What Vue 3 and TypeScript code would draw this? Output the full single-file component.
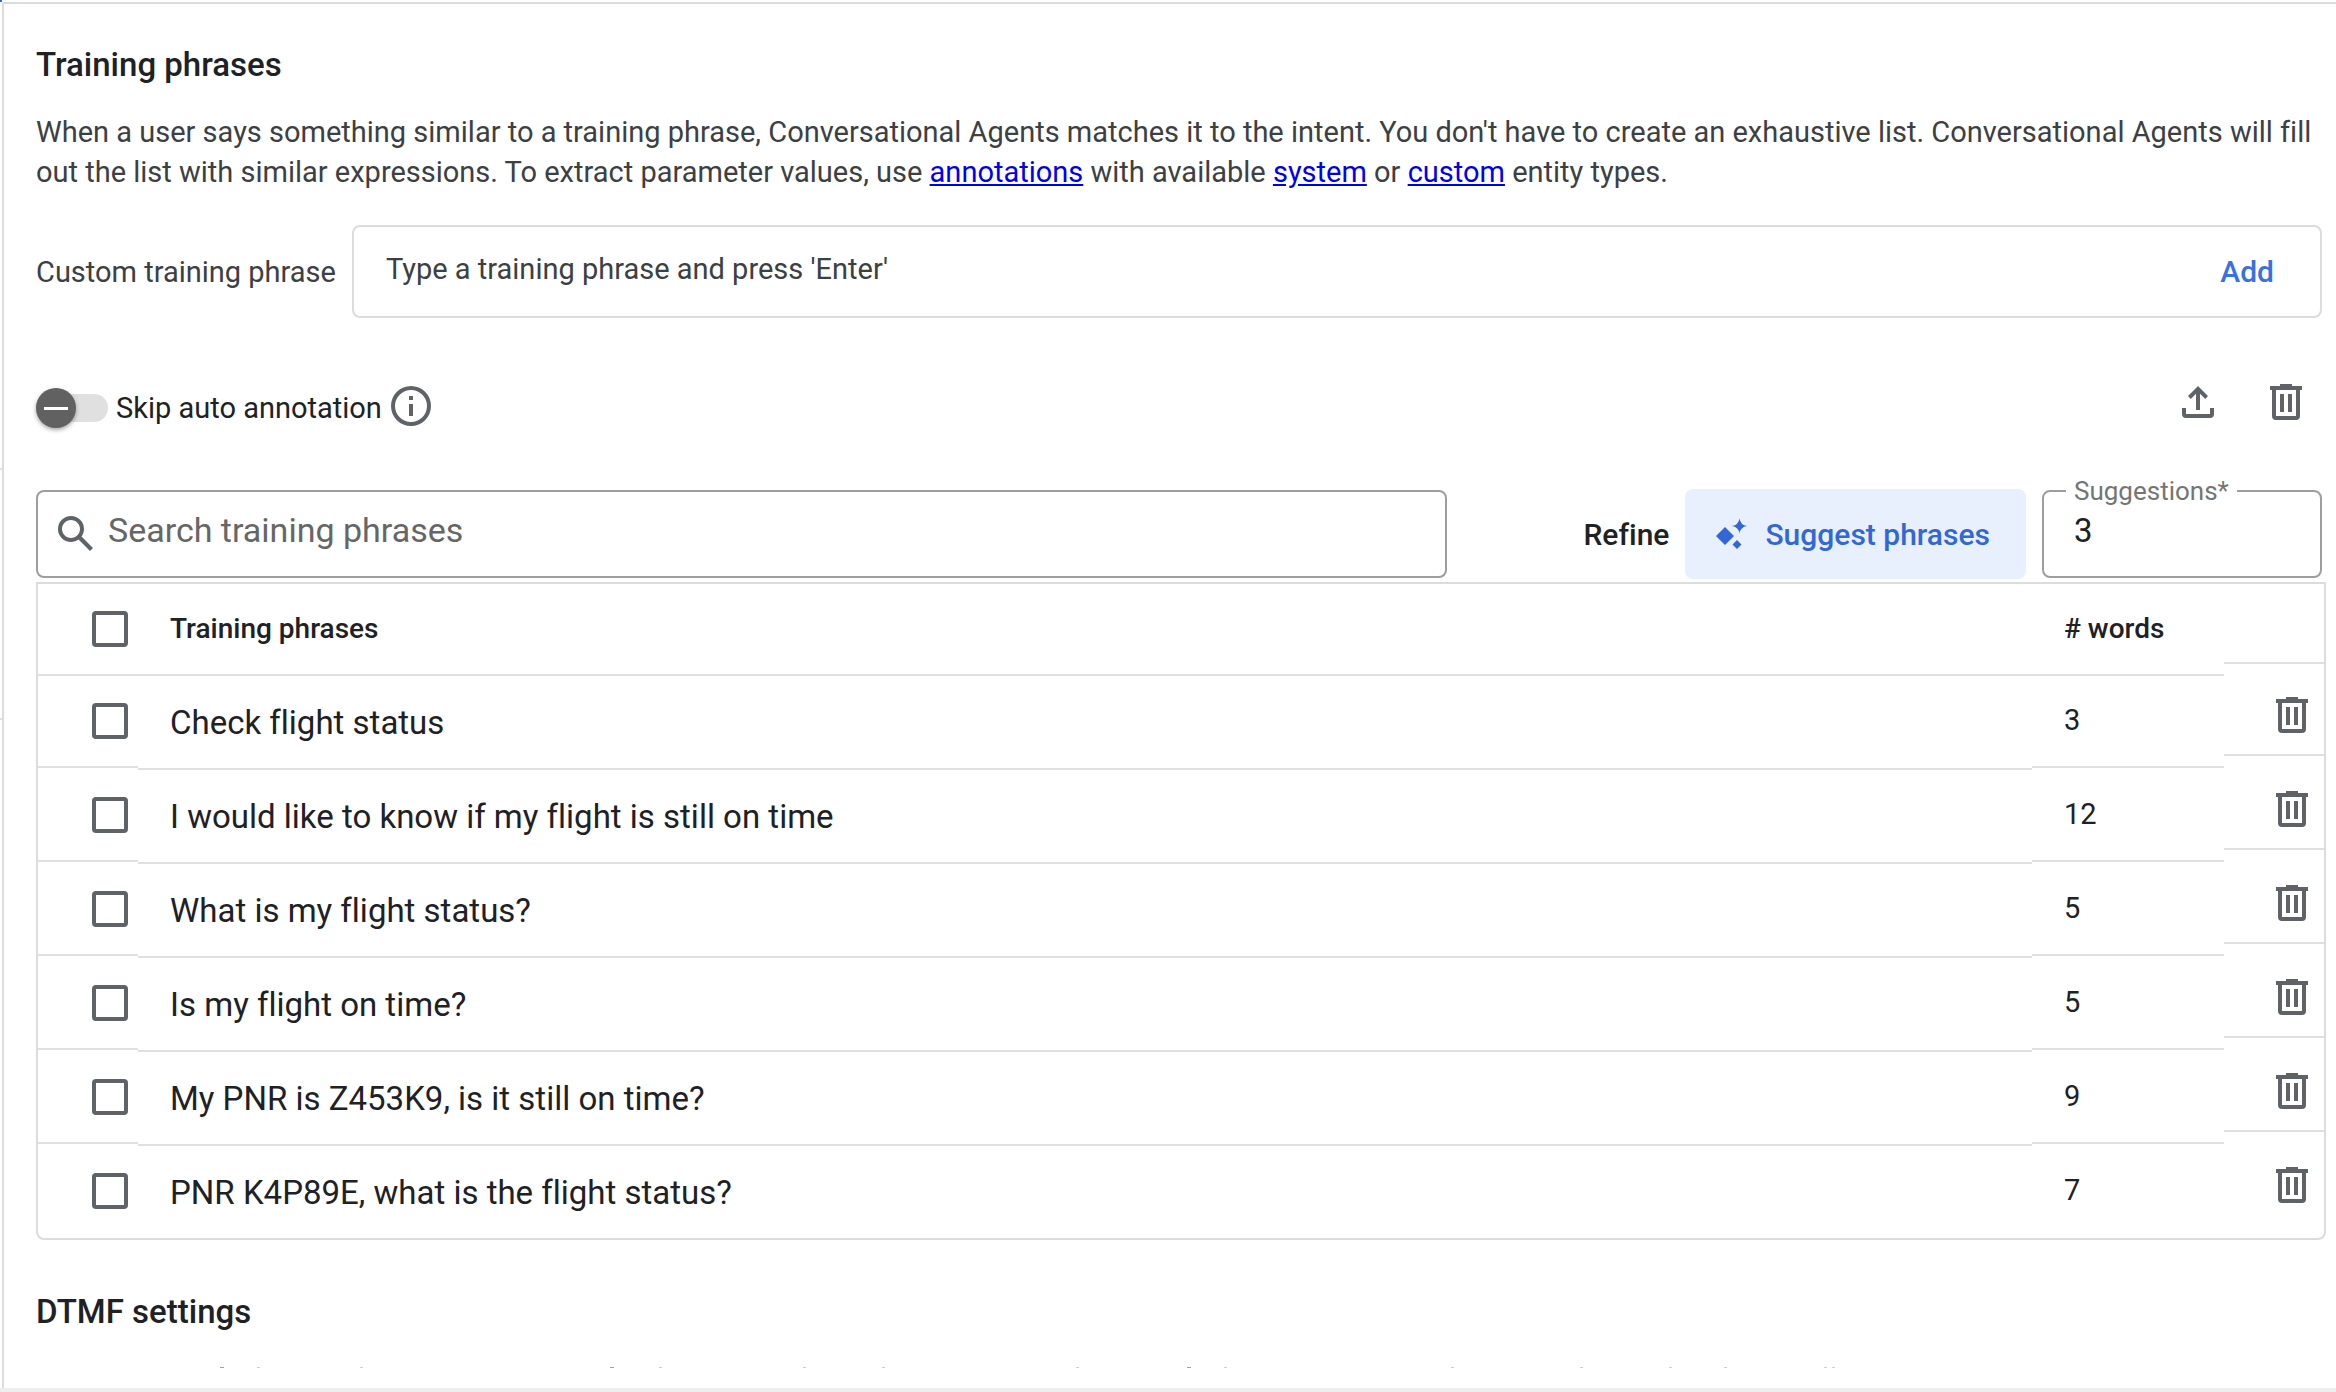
<script setup lang="ts">
import { ref } from 'vue'

interface Phrase {
  text: string
  words: number
}

const phrases = ref<Phrase[]>([
  { text: 'Check flight status', words: 3 },
  { text: 'I would like to know if my flight is still on time', words: 12 },
  { text: 'What is my flight status?', words: 5 },
  { text: 'Is my flight on time?', words: 5 },
  { text: 'My PNR is Z453K9, is it still on time?', words: 9 },
  { text: 'PNR K4P89E, what is the flight status?', words: 7 },
])

const suggestions = ref('3')
const skipAnnotation = ref(false)

const trashPath =
  'M7 21a2 2 0 0 1-2-2V6H4V4h5V3h6v1h5v2h-1v13a2 2 0 0 1-2 2H7zM17 6H7v13h10V6zM9 17h2V8H9v9zm4 0h2V8h-2v9z'

// Tops of the tall letters of the next section's first line: [x, width, opacity]
const peeks: [number, number, number][] = [
  [184, 4, 0.6], [221, 3, 0.3], [324, 3, 0.3], [574, 4, 0.6], [623, 3, 0.3],
  [767, 3, 0.3], [846, 3, 0.3], [1040, 3, 0.3], [1151, 4, 0.6], [1188, 3, 0.3],
  [1415, 3, 0.3], [1544, 3, 0.3], [1633, 3, 0.3], [1688, 3, 0.3], [1788, 3, 0.3], [1796, 3, 0.3],
]
</script>

<template>
  <div class="page">
    <div class="rail" aria-hidden="true"><i class="blue"></i><i class="tick"></i><i class="tick second"></i></div>
    <main class="panel">
      <h2 class="title">Training phrases</h2>
      <p class="intro">
        When a user says something similar to a training phrase, Conversational Agents matches it to the intent. You
        don't have to create an exhaustive list. Conversational Agents will fill
        out the list with similar expressions. To extract parameter values, use <a href="#annotations">annotations</a>
        with available <a href="#system">system</a> or <a href="#custom">custom</a> entity types.
      </p>

      <div class="custom">
        <label for="custom-phrase">Custom training phrase</label>
        <div class="custom-box">
          <input id="custom-phrase" type="text" placeholder="Type a training phrase and press 'Enter'" />
          <button type="button" class="add">Add</button>
        </div>
      </div>

      <div class="options">
        <label class="switch">
          <input v-model="skipAnnotation" type="checkbox" role="switch" />
          <span class="track"><span class="thumb"></span></span>
          <span class="switch-label">Skip auto annotation</span>
        </label>
        <button type="button" class="icon-btn info" aria-label="About auto annotation">
          <svg viewBox="0 0 24 24">
            <path d="M11 17h2v-6h-2v6zm0-8h2V7h-2v2zm1-7a10 10 0 1 0 0 20 10 10 0 0 0 0-20zm0 18a8 8 0 1 1 0-16 8 8 0 0 1 0 16z" />
          </svg>
        </button>
        <div class="actions">
          <button type="button" class="icon-btn" aria-label="Upload phrases">
            <svg viewBox="0 0 24 24">
              <path d="M11 16V7.85l-2.6 2.6L7 9l5-5 5 5-1.4 1.45-2.6-2.6V16h-2zM6 20a2 2 0 0 1-2-2v-3h2v3h12v-3h2v3a2 2 0 0 1-2 2H6z" />
            </svg>
          </button>
          <button type="button" class="icon-btn" aria-label="Delete selected phrases">
            <svg viewBox="0 0 24 24"><path :d="trashPath" /></svg>
          </button>
        </div>
      </div>

      <div class="tools">
        <div class="search">
          <svg viewBox="0 0 24 24" aria-hidden="true">
            <path d="M20.49 19l-5.73-5.73C15.53 12.2 16 10.91 16 9.5A6.5 6.5 0 1 0 9.5 16c1.41 0 2.7-.47 3.77-1.24L19 20.49 20.49 19zM5 9.5C5 7.01 7.01 5 9.5 5S14 7.01 14 9.5 11.99 14 9.5 14 5 11.99 5 9.5z" />
          </svg>
          <input type="text" aria-label="Search training phrases" placeholder="Search training phrases" />
        </div>
        <button type="button" class="refine">Refine</button>
        <button type="button" class="suggest">
          <svg viewBox="0 0 48 48" aria-hidden="true">
            <path d="M20 17L29 26 20 35 11 26zM34.500 8.500Q35.500 15 42 16 35.500 17 34.500 23.500 33.500 17 27 16 33.500 15 34.500 8.500zM32 30L36.500 34.500 32 39 27.500 34.500z" />
          </svg>
          Suggest phrases
        </button>
        <fieldset class="count">
          <legend><label for="count">Suggestions*</label></legend>
          <input id="count" v-model="suggestions" type="text" inputmode="numeric" />
        </fieldset>
      </div>

      <table class="phrases">
        <colgroup>
          <col class="c-check" />
          <col />
          <col class="c-words" />
          <col class="c-action" />
        </colgroup>
        <thead>
          <tr>
            <th><div class="cell check"><input type="checkbox" aria-label="Select all phrases" /></div></th>
            <th scope="col"><div class="cell head">Training phrases</div></th>
            <th scope="col"><div class="cell head"># words</div></th>
            <th><div class="cell action"></div></th>
          </tr>
        </thead>
        <tbody>
          <tr v-for="phrase in phrases" :key="phrase.text">
            <td><div class="cell check"><input type="checkbox" :aria-label="`Select ${phrase.text}`" /></div></td>
            <td><div class="cell text">{{ phrase.text }}</div></td>
            <td><div class="cell words">{{ phrase.words }}</div></td>
            <td>
              <div class="cell action">
                <button type="button" class="icon-btn" :aria-label="`Delete ${phrase.text}`">
                  <svg viewBox="0 0 24 24"><path :d="trashPath" /></svg>
                </button>
              </div>
            </td>
          </tr>
        </tbody>
      </table>

      <h2 class="title dtmf">DTMF settings</h2>
      <svg class="peek" viewBox="0 0 1800 1" aria-hidden="true">
        <rect v-for="[x, w, o] in peeks" :key="x" :x="x" y="0" :width="w" height="1" :opacity="o" />
      </svg>
    </main>
  </div>
</template>

<style>
body {
  margin: 0;
  background: #fff;
}
</style>

<style scoped>
* {
  box-sizing: border-box;
}

.page {
  display: flex;
  min-height: 100vh;
  border-bottom: 4px solid #eee;
  font-family: Roboto, "Liberation Sans", sans-serif;
  font-size: 29px;
  font-variant-ligatures: none;
  color: #202124;
}

button,
input {
  font: inherit;
  color: inherit;
  margin: 0;
  padding: 0;
  border: 0;
  background: none;
}

button {
  cursor: pointer;
}

svg {
  display: block;
  fill: #5f6368;
}

.rail {
  width: 2px;
  display: flex;
  flex-direction: column;
}

.rail i {
  height: 2px;
}

.blue {
  background: #3367d6;
}

.tick {
  margin-top: 466px;
  background: #e0e0e0;
}

.tick.second {
  margin-top: 248px;
}

.panel {
  flex: 1;
  min-width: 0;
  margin-top: 2px;
  border-top: 2px solid #dadce0;
  border-left: 2px solid #dadce0;
  padding: 41px 10px 0 32px;
}

.title {
  margin: 0;
  font-size: 33px;
  line-height: 40px;
  font-weight: 500;
}

.intro {
  margin: 27px 4px 0 0;
  line-height: 40px;
  color: #3c4043;
}

.intro a {
  color: #0000ee;
}

.custom {
  display: flex;
  align-items: center;
  gap: 16px;
  margin: 33px 4px 0 0;
  color: #3c4043;
}

.custom-box {
  flex: 1;
  display: flex;
  align-items: center;
  height: 93px;
  padding: 0 46px 0 32px;
  border: 2px solid #dadce0;
  border-radius: 8px;
}

.custom-box input {
  flex: 1;
  padding-bottom: 6px;
}

input::placeholder {
  color: inherit;
  opacity: 1;
}

input:focus-visible {
  outline: none;
}

.add {
  color: #3871e0;
  font-size: 30px;
  font-weight: 500;
}

.options {
  display: flex;
  align-items: center;
  height: 48px;
  margin-top: 60px;
}

.switch {
  display: flex;
  align-items: center;
  gap: 8px;
  padding-top: 12px;
}

.switch input {
  position: absolute;
  opacity: 0;
}

.track {
  width: 72px;
  height: 28px;
  border-radius: 14px;
  background: #e0e0e0;
  display: flex;
  align-items: center;
}

.thumb {
  width: 40px;
  height: 40px;
  border-radius: 50%;
  background: #616161;
  box-shadow: 0 2px 4px rgba(0, 0, 0, 0.35);
  display: flex;
  align-items: center;
  justify-content: center;
}

.thumb::before {
  content: "";
  width: 24px;
  height: 3px;
  background: #fff;
}

.icon-btn {
  width: 48px;
  height: 48px;
}

.icon-btn svg {
  width: 48px;
  height: 48px;
}

.info {
  margin: 8px 0 0 5px;
}

.actions {
  display: flex;
  gap: 40px;
  margin: 0 16px 0 auto;
}

.tools {
  display: flex;
  align-items: center;
  margin: 62px 4px 0 0;
  height: 92px;
}

.search {
  flex: 1;
  display: flex;
  align-items: center;
  gap: 8px;
  height: 88px;
  padding: 0 14px;
  border: 2px solid #9e9e9e;
  border-radius: 8px;
  color: #666;
  font-size: 34px;
}

.search svg {
  width: 48px;
  height: 48px;
}

.search input {
  flex: 1;
  min-width: 0;
  padding-bottom: 8px;
}

.refine {
  margin-left: 136px;
  font-size: 30px;
  font-weight: 500;
}

.suggest {
  display: flex;
  align-items: center;
  gap: 12px;
  height: 90px;
  margin-left: 16px;
  padding: 0 36px 0 20px;
  border-radius: 8px;
  background: #e8f0fe;
  color: #3367d6;
  font-size: 30px;
  font-weight: 500;
}

.suggest svg {
  width: 48px;
  height: 48px;
  fill: #3367d6;
}

.count {
  width: 280px;
  height: 101px;
  margin: 0 0 13px 16px;
  padding: 0 30px;
  min-width: 0;
  border: 2px solid #9e9e9e;
  border-radius: 8px;
}

.count legend {
  margin-left: -8px;
  padding: 0 8px;
  font-size: 26px;
  line-height: 28px;
  color: #757575;
}

.count input {
  width: 100%;
  padding-top: 6px;
  font-size: 33px;
}

.phrases {
  width: 100%;
  margin-top: 2px;
  table-layout: fixed;
  border: 2px solid #dadce0;
  border-radius: 0 0 8px 8px;
  border-spacing: 0;
}

.c-check {
  width: 100px;
}

.c-words {
  width: 192px;
}

.c-action {
  width: 100px;
}

.phrases th,
.phrases td {
  padding: 0;
  vertical-align: top;
  text-align: left;
  font-weight: 400;
}

.cell {
  display: flex;
  align-items: center;
  height: 92px;
  border-bottom: 2px solid #e0e0e0;
}

.check {
  padding-left: 54px;
}

.head {
  padding: 0 0 2px 32px;
  font-size: 28px;
  font-weight: 500;
}

.text {
  height: 94px;
  padding-left: 32px;
  font-size: 33px;
}

.words {
  padding: 0 0 2px 32px;
}

.action {
  height: 80px;
  justify-content: flex-end;
  padding-right: 8px;
}

tbody tr:last-child .cell {
  border-bottom-color: transparent;
}

tbody tr:last-child .text {
  height: 92px;
  border-bottom-width: 0;
}

.check input {
  appearance: none;
  width: 36px;
  height: 36px;
  border: 4px solid #5f6368;
  border-radius: 4px;
}

.dtmf {
  margin-top: 52px;
}

.peek {
  width: 1800px;
  height: 1px;
  margin-top: 35px;
}
</style>
